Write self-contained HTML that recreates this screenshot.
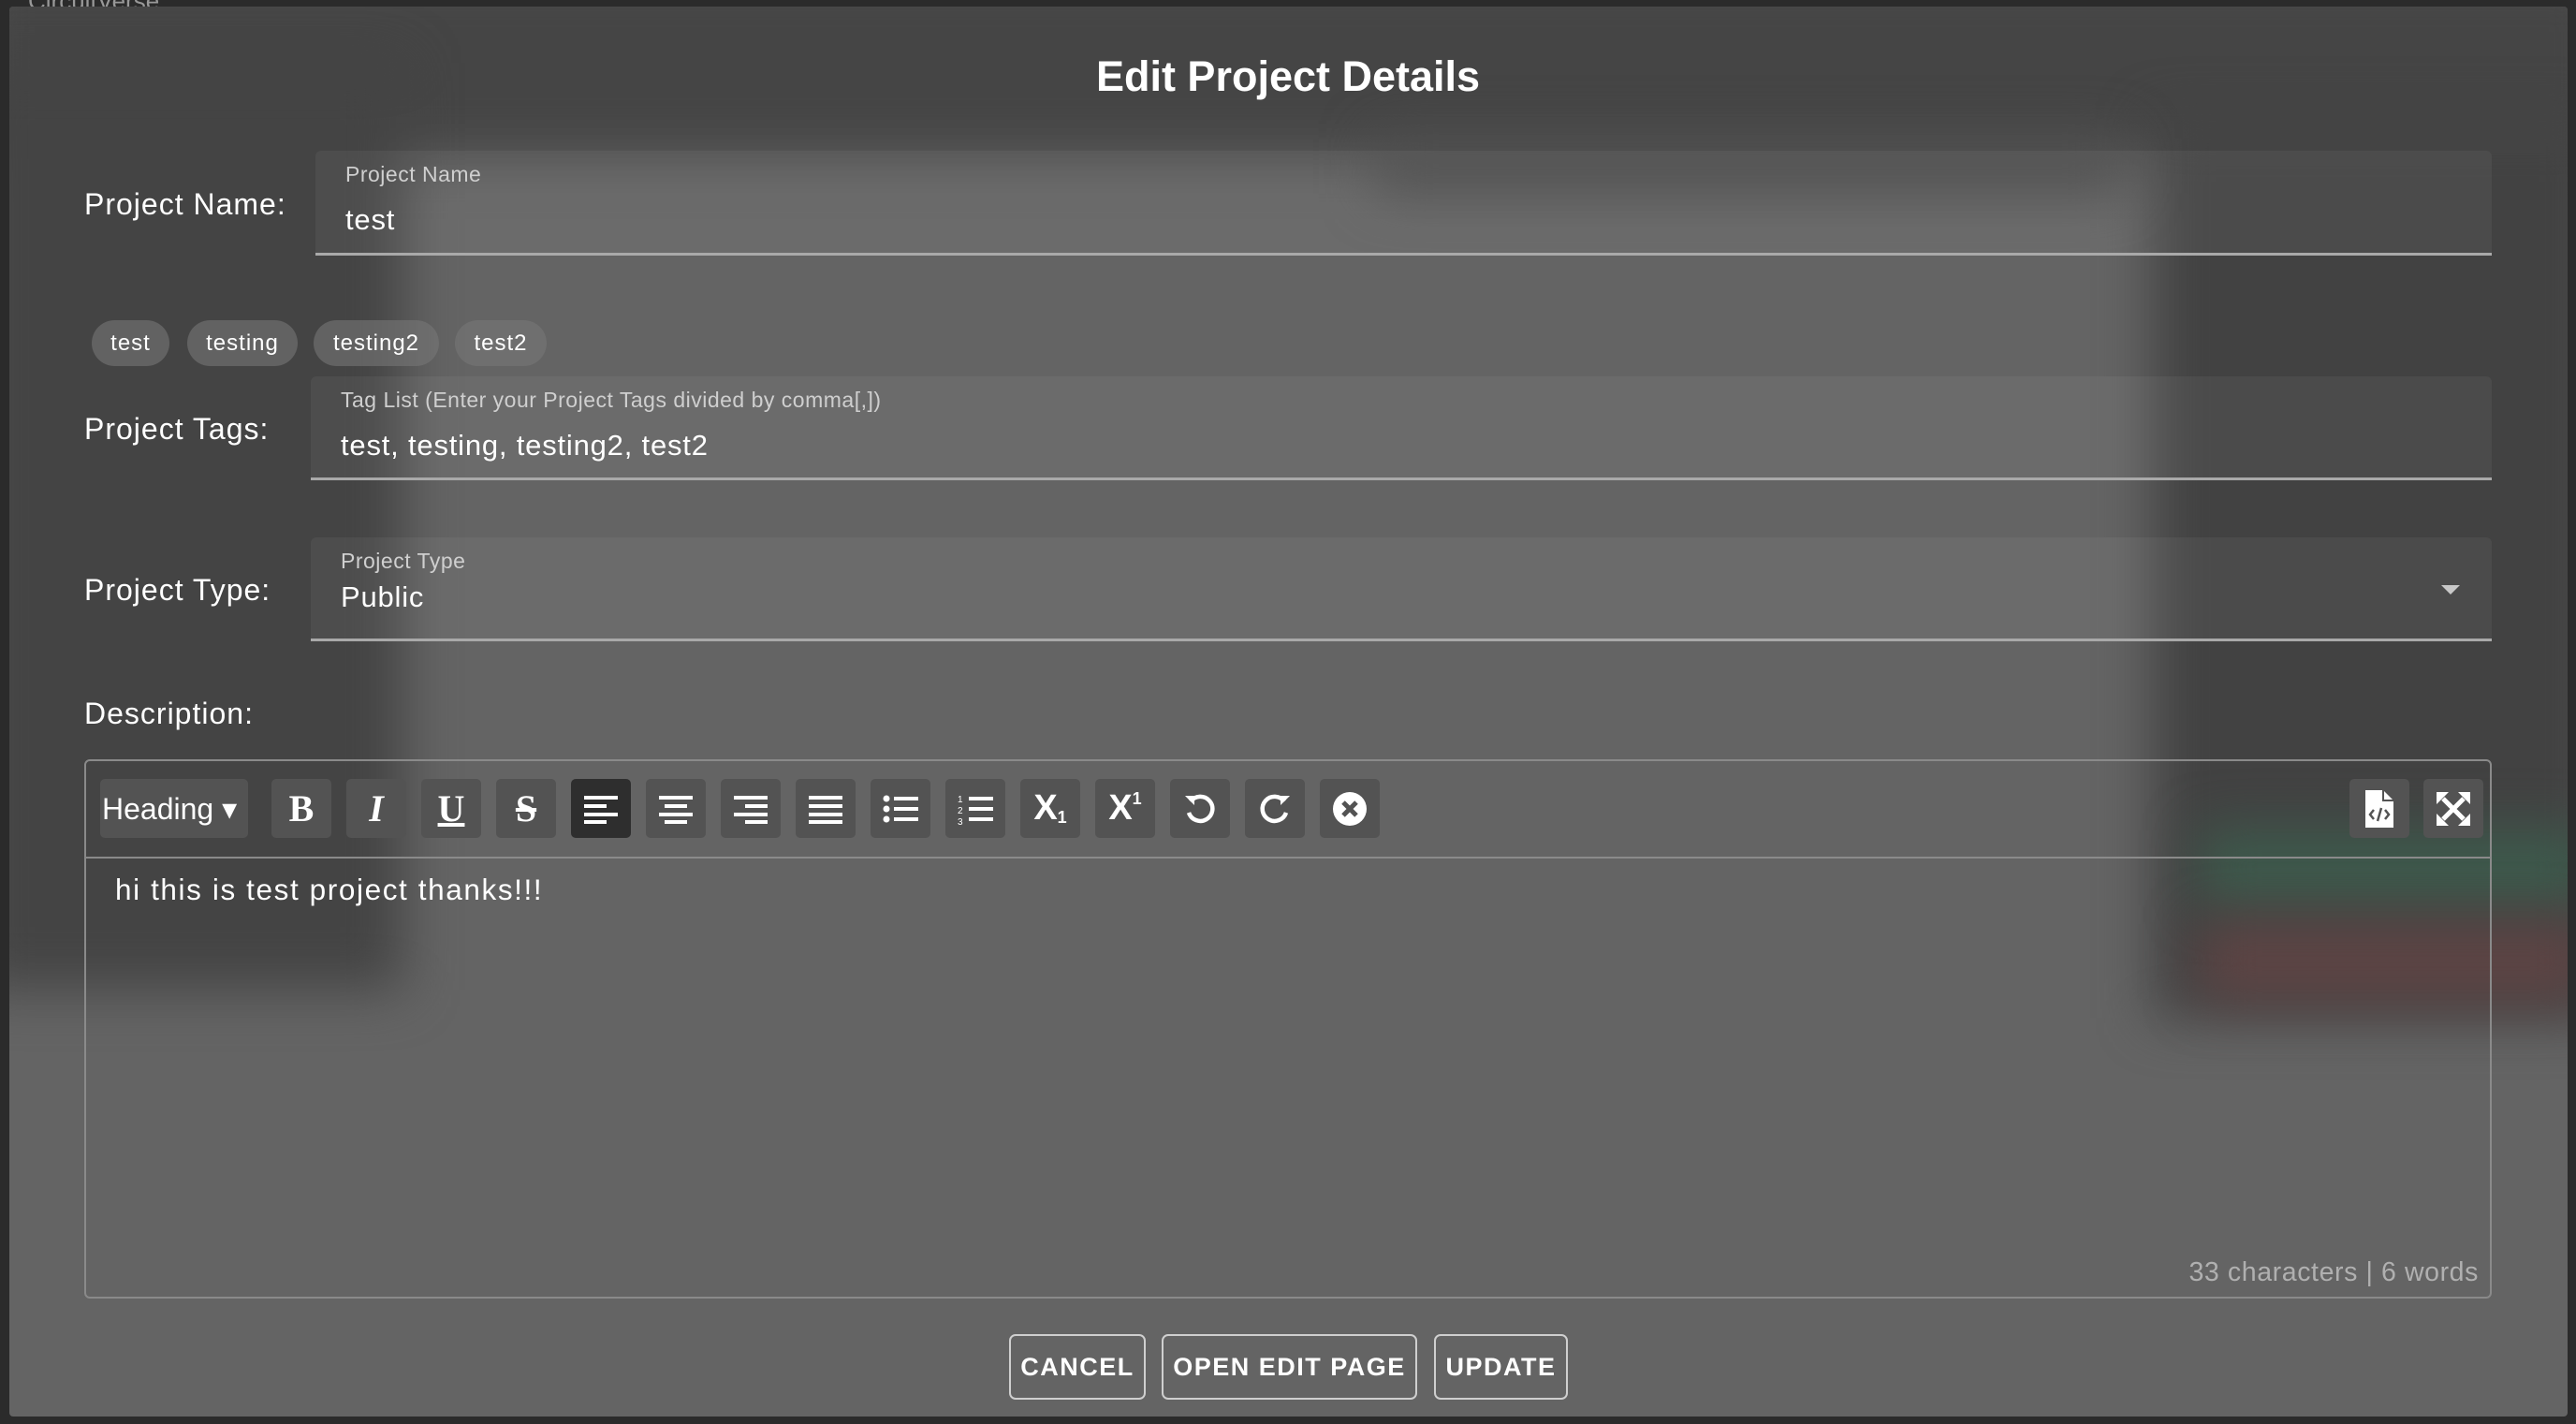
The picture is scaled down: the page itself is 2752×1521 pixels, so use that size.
<!DOCTYPE html>
<html><head><meta charset="utf-8"><style>
*{box-sizing:border-box;margin:0;padding:0}
body{width:2752px;height:1521px;background:#2b2b2b;position:relative;overflow:hidden;font-family:"Liberation Sans",sans-serif;color:#fff}
.dlg{position:absolute;left:10px;top:7px;width:2733px;height:1506px;background:#646464;border-radius:4px;overflow:hidden}
.blur{position:absolute;filter:blur(28px)}
.abs{position:absolute;white-space:nowrap}
.lbl{font-size:32px;letter-spacing:1px;color:#fff}
.field{position:absolute;background:rgba(255,255,255,0.05);border-bottom:3px solid #a9a9a9;border-radius:6px 6px 0 0}
.flab{position:absolute;font-size:23px;color:#cfcfcf;letter-spacing:0.5px;white-space:nowrap}
.fval{position:absolute;font-size:31px;color:#fff;letter-spacing:0.8px;white-space:nowrap}
.chip{position:absolute;top:342px;height:49px;border-radius:25px;background:rgba(118,118,118,0.6);font-size:24px;line-height:49px;text-align:center;letter-spacing:1px}
.tb{position:absolute;top:832px;width:64px;height:63px;background:#535353;border-radius:5px;display:flex;align-items:center;justify-content:center;font-size:40px;color:#fff}
.btn{position:absolute;top:1425px;height:70px;border:2px solid #cfcfcf;border-radius:7px;font-size:27px;line-height:66px;text-align:center;letter-spacing:1.5px;font-weight:bold}
</style></head><body>
<div class="abs" style="left:30px;top:-14px;font-size:26px;color:#999">CircuitVerse</div>
<div class="dlg">
 <div class="blur" style="left:-40px;top:-40px;width:2820px;height:200px;background:#454545"></div>
 <div class="blur" style="left:-40px;top:60px;width:460px;height:990px;background:#444"></div>
 <div class="blur" style="left:2290px;top:120px;width:480px;height:960px;background:#424242"></div>
 <div class="blur" style="left:2340px;top:880px;width:420px;height:80px;background:#3d5a4c"></div>
 <div class="blur" style="left:2340px;top:980px;width:420px;height:80px;background:#5e4444"></div>
 <div class="blur" style="left:1460px;top:140px;width:800px;height:60px;background:#4c4c4c"></div>
</div>
<div class="abs" style="left:0;top:56px;width:2752px;text-align:center;font-size:45px;font-weight:bold;color:#fff">Edit Project Details</div>

<div class="abs lbl" style="left:90px;top:200px">Project Name:</div>
<div class="field" style="left:337px;top:161px;width:2325px;height:112px">
 <div class="flab" style="left:32px;top:12px">Project Name</div>
 <div class="fval" style="left:32px;top:56px">test</div>
</div>

<div class="chip" style="left:98px;width:83px">test</div>
<div class="chip" style="left:200px;width:118px">testing</div>
<div class="chip" style="left:335px;width:134px">testing2</div>
<div class="chip" style="left:486px;width:98px">test2</div>

<div class="abs lbl" style="left:90px;top:440px">Project Tags:</div>
<div class="field" style="left:332px;top:402px;width:2330px;height:111px">
 <div class="flab" style="left:32px;top:12px">Tag List (Enter your Project Tags divided by comma[,])</div>
 <div class="fval" style="left:32px;top:56px">test, testing, testing2, test2</div>
</div>

<div class="abs lbl" style="left:90px;top:612px">Project Type:</div>
<div class="field" style="left:332px;top:574px;width:2330px;height:111px">
 <div class="flab" style="left:32px;top:12px">Project Type</div>
 <div class="fval" style="left:32px;top:46px">Public</div>
 <div style="position:absolute;left:2276px;top:51px;width:0;height:0;border-left:10px solid transparent;border-right:10px solid transparent;border-top:10px solid #c8c8c8"></div>
</div>

<div class="abs lbl" style="left:90px;top:744px">Description:</div>
<div class="abs" style="left:90px;top:811px;width:2572px;height:576px;border:2px solid #8a8a8a;border-radius:6px"></div>
<div class="abs" style="left:91px;top:915px;width:2570px;height:2px;background:#8a8a8a"></div>

<div class="tb" style="left:107px;width:158px;font-size:32px;justify-content:flex-start;padding-left:2px">Heading&nbsp;▾</div>
<div class="tb" style="left:290px;font-family:'Liberation Serif',serif;font-weight:bold">B</div>
<div class="tb" style="left:370px;font-family:'Liberation Serif',serif;font-style:italic;font-weight:bold">I</div>
<div class="tb" style="left:450px;font-family:'Liberation Serif',serif;font-weight:bold;text-decoration:underline">U</div>
<div class="tb" style="left:530px;font-family:'Liberation Serif',serif;font-weight:bold;text-decoration:line-through">S</div>
<div class="tb" style="left:610px;background:#2e2e2e"><svg width="36" height="32"><rect x="0" y="2" width="36" height="4" fill="#fff"/><rect x="0" y="11" width="24" height="4" fill="#fff"/><rect x="0" y="20" width="36" height="4" fill="#fff"/><rect x="0" y="28" width="24" height="4" fill="#fff"/></svg></div>
<div class="tb" style="left:690px"><svg width="36" height="32"><rect x="0" y="2" width="36" height="4" fill="#fff"/><rect x="6" y="11" width="24" height="4" fill="#fff"/><rect x="0" y="20" width="36" height="4" fill="#fff"/><rect x="6" y="28" width="24" height="4" fill="#fff"/></svg></div>
<div class="tb" style="left:770px"><svg width="36" height="32"><rect x="0" y="2" width="36" height="4" fill="#fff"/><rect x="12" y="11" width="24" height="4" fill="#fff"/><rect x="0" y="20" width="36" height="4" fill="#fff"/><rect x="12" y="28" width="24" height="4" fill="#fff"/></svg></div>
<div class="tb" style="left:850px"><svg width="36" height="32"><rect x="0" y="2" width="36" height="4" fill="#fff"/><rect x="0" y="11" width="36" height="4" fill="#fff"/><rect x="0" y="20" width="36" height="4" fill="#fff"/><rect x="0" y="28" width="36" height="4" fill="#fff"/></svg></div>
<div class="tb" style="left:930px"><svg width="38" height="32"><circle cx="4" cy="5" r="3.5" fill="#fff"/><circle cx="4" cy="16" r="3.5" fill="#fff"/><circle cx="4" cy="27" r="3.5" fill="#fff"/><rect x="12" y="3" width="26" height="4" fill="#fff"/><rect x="12" y="14" width="26" height="4" fill="#fff"/><rect x="12" y="25" width="26" height="4" fill="#fff"/></svg></div>
<div class="tb" style="left:1010px"><svg width="38" height="34"><text x="0" y="10" font-size="10" fill="#fff" font-family="Liberation Sans">1</text><text x="0" y="22" font-size="10" fill="#fff" font-family="Liberation Sans">2</text><text x="0" y="34" font-size="10" fill="#fff" font-family="Liberation Sans">3</text><rect x="12" y="4" width="26" height="4" fill="#fff"/><rect x="12" y="15" width="26" height="4" fill="#fff"/><rect x="12" y="26" width="26" height="4" fill="#fff"/></svg></div>
<div class="tb" style="left:1090px;font-weight:bold;font-size:38px">X<span style="font-size:18px;margin-top:20px">1</span></div>
<div class="tb" style="left:1170px;font-weight:bold;font-size:38px">X<span style="font-size:18px;margin-top:-20px">1</span></div>
<div class="tb" style="left:1250px"><svg width="36" height="36" viewBox="0 0 36 36"><path d="M8 10 A13 13 0 1 1 6 22" fill="none" stroke="#fff" stroke-width="4.5"/><path d="M2 4 L12 4 L12 14 Z" fill="#fff"/></svg></div>
<div class="tb" style="left:1330px"><svg width="36" height="36" viewBox="0 0 36 36"><path d="M28 10 A13 13 0 1 0 30 22" fill="none" stroke="#fff" stroke-width="4.5"/><path d="M34 4 L24 4 L24 14 Z" fill="#fff"/></svg></div>
<div class="tb" style="left:1410px"><svg width="38" height="38" viewBox="0 0 38 38"><circle cx="19" cy="19" r="18" fill="#fff"/><path d="M12 12 L26 26 M26 12 L12 26" stroke="#535353" stroke-width="5"/></svg></div>
<div class="tb" style="left:2510px"><svg width="30" height="40" viewBox="0 0 30 40"><path d="M0 0 H19 L30 11 V40 H0 Z" fill="#fff"/><path d="M19 0 V11 H30" fill="none" stroke="#535353" stroke-width="2"/><path d="M9 21 L5 26 L9 31 M21 21 L25 26 L21 31 M17 19 L13 33" stroke="#535353" stroke-width="2.5" fill="none"/></svg></div>
<div class="tb" style="left:2589px"><svg width="36" height="36" viewBox="0 0 36 36"><path d="M7 7 L29 29 M29 7 L7 29" stroke="#fff" stroke-width="5"/><path d="M0 0 H13 L0 13 Z M36 0 V13 L23 0 Z M0 36 V23 L13 36 Z M36 36 H23 L36 23 Z" fill="#fff"/></svg></div>

<div class="abs" style="left:123px;top:932px;font-size:31.5px;letter-spacing:1.6px">hi this is test project thanks!!!</div>
<div class="abs" style="right:104px;top:1343px;font-size:28.5px;color:#b0b0b0;letter-spacing:0.6px">33 characters | 6 words</div>

<div class="btn" style="left:1078px;width:146px">CANCEL</div>
<div class="btn" style="left:1241px;width:273px">OPEN EDIT PAGE</div>
<div class="btn" style="left:1532px;width:143px">UPDATE</div>
</body></html>
